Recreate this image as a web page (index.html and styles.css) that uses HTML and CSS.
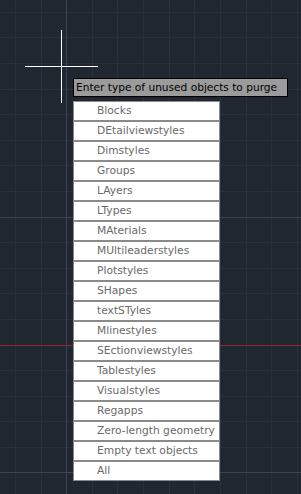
FILE: index.html
```html
<!DOCTYPE html>
<html>
<head>
<meta charset="utf-8">
<link rel="stylesheet" href="styles.css">
</head>
<body>
<div class="canvas">
  <svg class="grid" width="301" height="494" viewBox="0 0 301 494" shape-rendering="crispEdges">
    <g stroke="#2b313c" stroke-width="1">
      <line x1="15.5" y1="0" x2="15.5" y2="494"/>
      <line x1="41.5" y1="0" x2="41.5" y2="494"/>
      <line x1="92.5" y1="0" x2="92.5" y2="494"/>
      <line x1="117.5" y1="0" x2="117.5" y2="494"/>
      <line x1="143.5" y1="0" x2="143.5" y2="494"/>
      <line x1="169.5" y1="0" x2="169.5" y2="494"/>
      <line x1="194.5" y1="0" x2="194.5" y2="494"/>
      <line x1="220.5" y1="0" x2="220.5" y2="494"/>
      <line x1="246.5" y1="0" x2="246.5" y2="494"/>
      <line x1="271.5" y1="0" x2="271.5" y2="494"/>
      <line x1="297.5" y1="0" x2="297.5" y2="494"/>
      <line x1="0" y1="12.5" x2="301" y2="12.5"/>
      <line x1="0" y1="37.5" x2="301" y2="37.5"/>
      <line x1="0" y1="63.5" x2="301" y2="63.5"/>
      <line x1="0" y1="89.5" x2="301" y2="89.5"/>
      <line x1="0" y1="114.5" x2="301" y2="114.5"/>
      <line x1="0" y1="140.5" x2="301" y2="140.5"/>
      <line x1="0" y1="165.5" x2="301" y2="165.5"/>
      <line x1="0" y1="191.5" x2="301" y2="191.5"/>
      <line x1="0" y1="242.5" x2="301" y2="242.5"/>
      <line x1="0" y1="268.5" x2="301" y2="268.5"/>
      <line x1="0" y1="293.5" x2="301" y2="293.5"/>
      <line x1="0" y1="319.5" x2="301" y2="319.5"/>
      <line x1="0" y1="370.5" x2="301" y2="370.5"/>
      <line x1="0" y1="396.5" x2="301" y2="396.5"/>
      <line x1="0" y1="421.5" x2="301" y2="421.5"/>
      <line x1="0" y1="447.5" x2="301" y2="447.5"/>
    </g>
    <g stroke="#3c4354" stroke-width="1">
      <line x1="66.5" y1="0" x2="66.5" y2="494"/>
      <line x1="0" y1="217.5" x2="301" y2="217.5"/>
      <line x1="0" y1="472.5" x2="301" y2="472.5"/>
    </g>
    <line x1="0" y1="345.5" x2="301" y2="345.5" stroke="#8c2a30" stroke-width="1"/>
    <g stroke="#ffffff" stroke-width="1">
      <line x1="61.5" y1="30" x2="61.5" y2="103"/>
      <line x1="25" y1="66.5" x2="98" y2="66.5"/>
    </g>
  </svg>
  <div class="prompt">Enter type of unused objects to purge</div>
  <ul class="menu">
    <li class="item">Blocks</li>
    <li class="item">DEtailviewstyles</li>
    <li class="item">Dimstyles</li>
    <li class="item">Groups</li>
    <li class="item">LAyers</li>
    <li class="item">LTypes</li>
    <li class="item">MAterials</li>
    <li class="item">MUltileaderstyles</li>
    <li class="item">Plotstyles</li>
    <li class="item">SHapes</li>
    <li class="item">textSTyles</li>
    <li class="item">Mlinestyles</li>
    <li class="item">SEctionviewstyles</li>
    <li class="item">Tablestyles</li>
    <li class="item">Visualstyles</li>
    <li class="item">Regapps</li>
    <li class="item">Zero-length geometry</li>
    <li class="item">Empty text objects</li>
    <li class="item">All</li>
  </ul>
</div>
</body>
</html>
```

FILE: styles.css
```css
html, body {
  margin: 0;
  padding: 0;
  background: #212730;
}

.canvas {
  position: relative;
  width: 301px;
  height: 494px;
  overflow: hidden;
  background: #212730;
  font-family: "DejaVu Sans", "Liberation Sans", sans-serif;
}

.grid {
  position: absolute;
  left: 0;
  top: 0;
  display: block;
}

.prompt {
  position: absolute;
  left: 73px;
  top: 78px;
  width: 211px;
  height: 17px;
  box-sizing: content-box;
  border: 1px solid #000000;
  background: #9b9b9b;
  color: #000000;
  font-size: 10.6px;
  line-height: 17px;
  padding-left: 2px;
  white-space: nowrap;
}

.menu {
  position: absolute;
  left: 73px;
  top: 101px;
  width: 145px;
  margin: 0;
  padding: 0;
  list-style: none;
  border: 1px solid #8a8a8a;
  background: #8a8a8a;
  display: flex;
  flex-direction: column;
  gap: 2px;
}

.item {
  height: 18px;
  line-height: 18px;
  background: #ffffff;
  color: #6a6a6a;
  font-size: 10.7px;
  padding-left: 23px;
  white-space: nowrap;
}
```
